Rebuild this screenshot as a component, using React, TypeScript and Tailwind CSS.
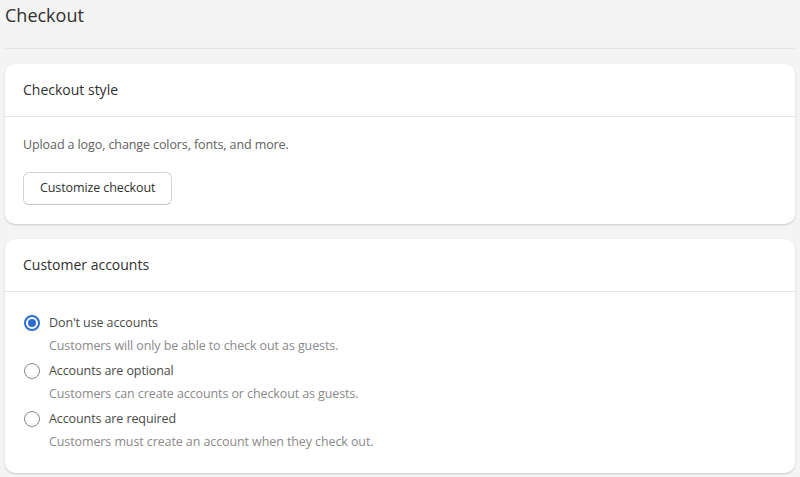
import React from "react";

const options = [
  { label: "Don't use accounts", help: "Customers will only be able to check out as guests.", checked: true },
  { label: "Accounts are optional", help: "Customers can create accounts or checkout as guests.", checked: false },
  { label: "Accounts are required", help: "Customers must create an account when they check out.", checked: false },
];

function Radio({ checked }: { checked: boolean }) {
  return checked ? (
    <span className="mt-[2px] flex h-4 w-4 shrink-0 items-center justify-center rounded-full border-2 border-[#2c6ecb] bg-white">
      <span className="h-2 w-2 rounded-full bg-[#2c6ecb]" />
    </span>
  ) : (
    <span className="mt-[2px] h-4 w-4 shrink-0 rounded-full border border-[#8a8a8a] bg-white" />
  );
}

export default function App() {
  return (
    <div
      className="min-h-[477px] w-[800px] bg-[#f4f4f4] px-[5px] pt-[3px] text-[#303030]"
      style={{ fontFamily: '"Open Sans", "Noto Sans", sans-serif' }}
    >
      <h1 className="text-[18px] leading-[24px] font-normal text-[#303030]">Checkout</h1>
      <div className="mt-[21px] h-px bg-[#e6e6e6]" />
      <div className="mt-[15px] rounded-[10px] bg-white shadow-[0_1px_2px_rgba(0,0,0,0.18)]">
        <div className="border-b border-[#e6e6e6] px-[18px] py-4 text-[14px] leading-[20px]">Checkout style</div>
        <div className="px-[18px] pt-[18px] pb-[19px]">
          <p className="text-[12.5px] leading-[20px] tracking-[-0.1px] text-[#616161]">
            Upload a logo, change colors, fonts, and more.
          </p>
          <button className="mt-[17px] h-[33px] rounded-[6px] border border-[#d4d4d4] border-b-[#c4c4c4] bg-white px-4 text-[12.5px] tracking-[-0.1px] text-[#303030]">
            Customize checkout
          </button>
        </div>
      </div>
      <div className="mt-[15px] rounded-[10px] bg-white shadow-[0_1px_2px_rgba(0,0,0,0.18)]">
        <div className="border-b border-[#e6e6e6] px-[18px] py-4 text-[14px] leading-[20px]">Customer accounts</div>
        <div className="flex flex-col gap-[5px] px-[19px] pt-[21px] pb-[21px]">
          {options.map((o) => (
            <div key={o.label} className="flex gap-[9px]">
              <Radio checked={o.checked} />
              <div>
                <div className="text-[12.5px] leading-[20px] tracking-[-0.1px] text-[#4a4a4a]">{o.label}</div>
                <div className="mt-[3px] text-[12.5px] leading-[20px] tracking-[-0.1px] text-[#8a8a8a]">{o.help}</div>
              </div>
            </div>
          ))}
        </div>
      </div>
    </div>
  );
}
